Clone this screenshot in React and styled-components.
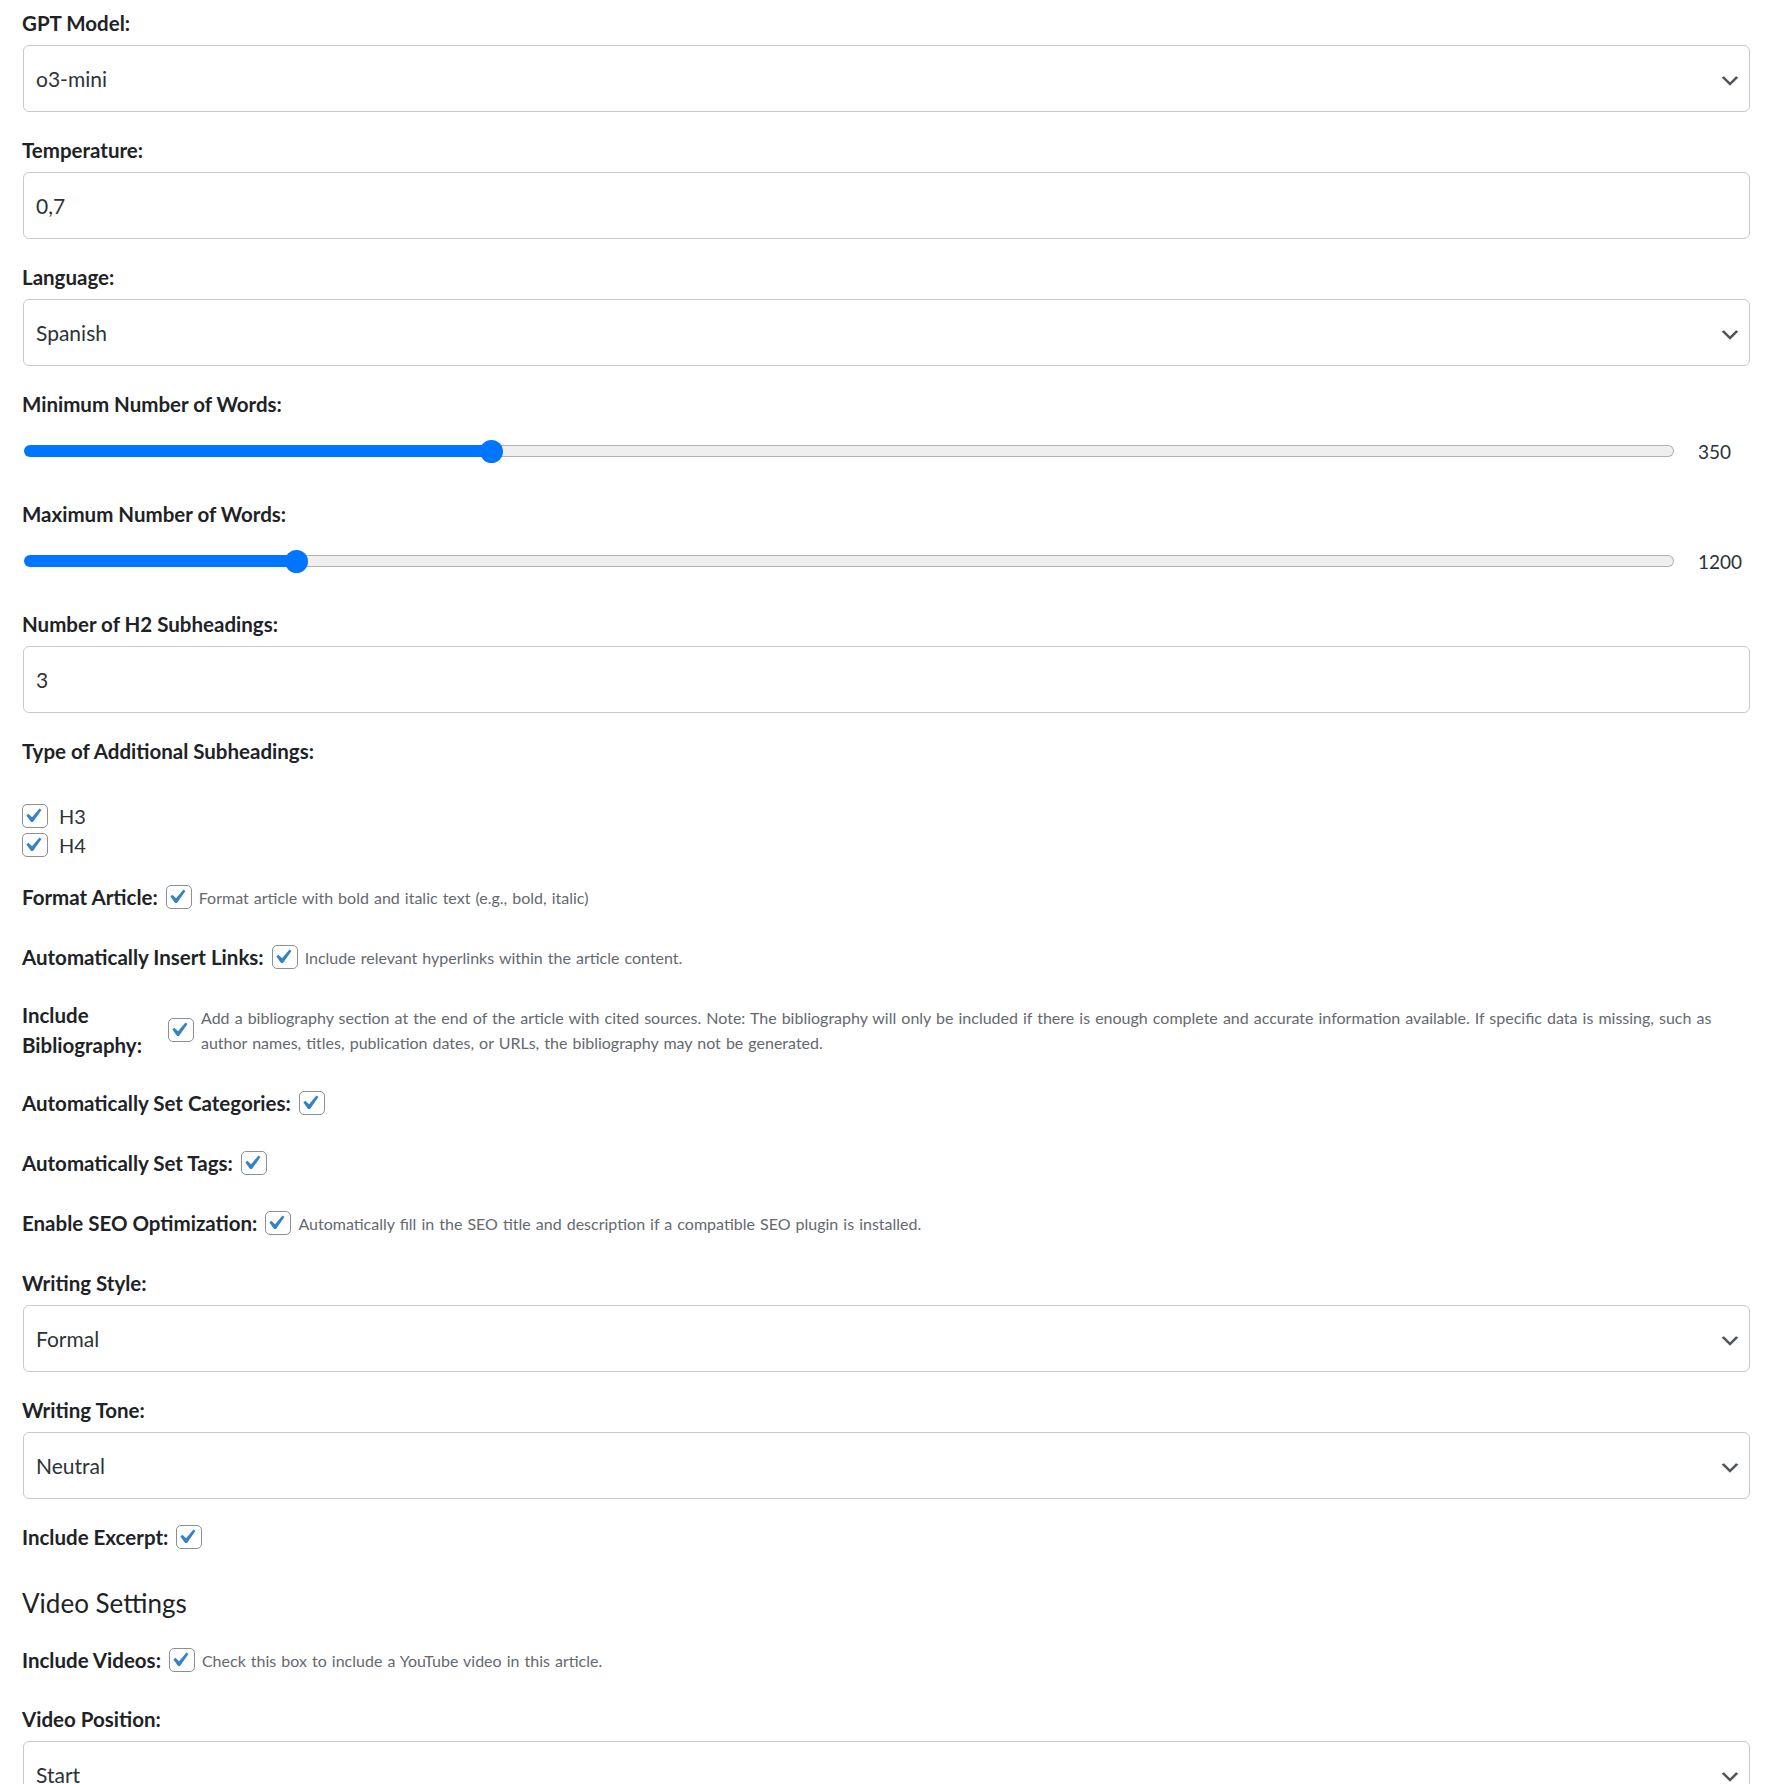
import React, { useState } from "react";
import styled, { createGlobalStyle } from "styled-components";

const GlobalStyle = createGlobalStyle`
  html, body {
    margin: 0;
    padding: 0;
    background: #fff;
  }
  body {
    font-family: Lato, "Noto Sans", sans-serif;
    color: #1d2327;
  }
  * {
    box-sizing: border-box;
  }
`;

const Page = styled.form`
  padding: 11px 16px 0 22px;
`;

const Field = styled.div`
  margin-bottom: ${(p) => p.$mb || "26px"};
`;

const FieldLabel = styled.label`
  display: block;
  font-size: 20.5px;
  font-weight: 700;
  line-height: 24px;
  margin-bottom: 10px;
`;

const SelectWrap = styled.div`
  position: relative;
  margin-left: 1px;
`;

const Select = styled.select`
  appearance: none;
  -webkit-appearance: none;
  display: block;
  width: 100%;
  height: 67px;
  padding: 0 48px 0 12px;
  border: 1px solid #c8c9cc;
  border-radius: 6px;
  background: #fff;
  font-family: inherit;
  font-size: 21px;
  color: #2c3338;
  outline: none;
`;

const Chevron = styled.svg`
  position: absolute;
  right: 8px;
  top: 24px;
  width: 24px;
  height: 24px;
  pointer-events: none;
`;

const TextInput = styled.input`
  display: block;
  width: calc(100% - 1px);
  margin-left: 1px;
  height: 67px;
  padding: 0 12px;
  border: 1px solid #c8c9cc;
  border-radius: 6px;
  font-family: inherit;
  font-size: 21px;
  color: #2c3338;
  outline: none;
`;

const SliderRow = styled.div`
  display: flex;
  align-items: center;
  height: 50px;
`;

const Range = styled.input`
  flex: 1;
  min-width: 0;
  height: 24px;
  margin: 0 0 0 2px;
  -webkit-appearance: none;
  appearance: none;
  background: transparent;

  &::-webkit-slider-runnable-track {
    height: 12px;
    border-radius: 6px;
    border: 1px solid transparent;
    background:
      linear-gradient(to right, #0075ff var(--fill), #efefef var(--fill)) padding-box,
      linear-gradient(to right, #0075ff var(--fill), #b2b2b2 var(--fill)) border-box;
  }

  &::-webkit-slider-thumb {
    -webkit-appearance: none;
    width: 23px;
    height: 23px;
    margin-top: -6.5px;
    border: none;
    border-radius: 50%;
    background: #0075ff;
  }
`;

const RangeValue = styled.span`
  width: 52px;
  margin-left: 24px;
  font-size: 19px;
  color: #2c3338;
`;

const OptionList = styled.div`
  margin-top: 38px;
  margin-bottom: 21px;
`;

const OptionRow = styled.label`
  display: flex;
  align-items: center;
  height: 29px;
  font-size: 20px;
  color: #2c3338;
`;

const OptionText = styled.span`
  margin-left: 11px;
`;

const InlineRow = styled.div`
  display: flex;
  align-items: center;
  min-height: 34px;
  margin-bottom: ${(p) => p.$mb || "26px"};
`;

const InlineLabel = styled.label`
  flex-shrink: 0;
  width: ${(p) => p.$width || "auto"};
  margin-right: 8px;
  font-size: 20.5px;
  font-weight: 700;
  line-height: 30px;
`;

const Hint = styled.span`
  margin-left: 7px;
  font-size: 16px;
  line-height: 25px;
  word-spacing: 0.06em;
  color: #646970;
`;

const Box = styled.span`
  display: inline-flex;
  flex-shrink: 0;
  width: 26px;
  height: 24px;
  border: 1px solid #8c8f94;
  border-radius: 5px;
  background: #fff;
  overflow: visible;

  svg {
    width: 32px;
    height: 32px;
    margin: -5px 0 0 -5px;
  }
`;

const SectionTitle = styled.h2`
  margin: 33px 0 24px;
  font-size: 26px;
  font-weight: 400;
  line-height: 32px;
  color: #1d2327;
`;

const Check = () => (
  <Box role="checkbox" aria-checked="true">
    <svg viewBox="0 0 20 20">
      <path
        d="M14.83 4.89l1.34.94-5.81 8.38H9.02L5.78 9.67l1.34-1.25 2.57 2.4z"
        fill="#3582c4"
      />
    </svg>
  </Box>
);

const SelectField = ({ label, value, options, mb }) => (
  <Field $mb={mb}>
    <FieldLabel>{label}</FieldLabel>
    <SelectWrap>
      <Select defaultValue={value}>
        {options.map((o) => (
          <option key={o}>{o}</option>
        ))}
      </Select>
      <Chevron viewBox="0 0 20 20">
        <path d="M5 6l5 5 5-5 2 1-7 7-7-7 2-1z" fill="#50575e" />
      </Chevron>
    </SelectWrap>
  </Field>
);

const InputField = ({ label, value }) => (
  <Field>
    <FieldLabel>{label}</FieldLabel>
    <TextInput type="text" defaultValue={value} />
  </Field>
);

const SliderField = ({ label, min, max, initial }) => {
  const [value, setValue] = useState(initial);
  const frac = (value - min) / (max - min);
  return (
    <Field>
      <FieldLabel>{label}</FieldLabel>
      <SliderRow>
        <Range
          type="range"
          min={min}
          max={max}
          value={value}
          onChange={(e) => setValue(Number(e.target.value))}
          style={{ "--fill": `calc(11.5px + ${frac} * (100% - 23px))` }}
        />
        <RangeValue>{value}</RangeValue>
      </SliderRow>
    </Field>
  );
};

const ToggleRow = ({ label, hint, labelWidth, mb }) => (
  <InlineRow $mb={mb}>
    <InlineLabel $width={labelWidth}>{label}</InlineLabel>
    <Check />
    {hint && <Hint>{hint}</Hint>}
  </InlineRow>
);

const App = () => {
  return (
    <>
      <GlobalStyle />
      <Page>
        <SelectField
          label="GPT Model:"
          value="o3-mini"
          options={["gpt-4o", "gpt-4o-mini", "o3-mini"]}
        />
        <InputField label="Temperature:" value="0,7" />
        <SelectField
          label="Language:"
          value="Spanish"
          options={["English", "Spanish", "French", "German"]}
        />
        <SliderField label="Minimum Number of Words:" min={0} max={1250} initial={350} />
        <SliderField label="Maximum Number of Words:" min={0} max={7500} initial={1200} />
        <InputField label="Number of H2 Subheadings:" value="3" />

        <FieldLabel>Type of Additional Subheadings:</FieldLabel>
        <OptionList>
          <OptionRow>
            <Check />
            <OptionText>H3</OptionText>
          </OptionRow>
          <OptionRow>
            <Check />
            <OptionText>H4</OptionText>
          </OptionRow>
        </OptionList>

        <ToggleRow
          label="Format Article:"
          hint="Format article with bold and italic text (e.g., bold, italic)"
        />
        <ToggleRow
          label="Automatically Insert Links:"
          hint="Include relevant hyperlinks within the article content."
        />
        <ToggleRow
          label="Include Bibliography:"
          labelWidth="138px"
          hint="Add a bibliography section at the end of the article with cited sources. Note: The bibliography will only be included if there is enough complete and accurate information available. If specific data is missing, such as author names, titles, publication dates, or URLs, the bibliography may not be generated."
        />
        <ToggleRow label="Automatically Set Categories:" />
        <ToggleRow label="Automatically Set Tags:" />
        <ToggleRow
          label="Enable SEO Optimization:"
          hint="Automatically fill in the SEO title and description if a compatible SEO plugin is installed."
          mb="31px"
        />

        <SelectField
          label="Writing Style:"
          value="Formal"
          options={["Formal", "Informal", "Academic"]}
        />
        <SelectField
          label="Writing Tone:"
          value="Neutral"
          options={["Neutral", "Friendly", "Persuasive"]}
          mb="21px"
        />
        <ToggleRow label="Include Excerpt:" mb="0" />

        <SectionTitle>Video Settings</SectionTitle>
        <ToggleRow
          label="Include Videos:"
          hint="Check this box to include a YouTube video in this article."
          mb="30px"
        />
        <SelectField
          label="Video Position:"
          value="Start"
          options={["Start", "Middle", "End"]}
          mb="0"
        />
      </Page>
    </>
  );
};

export default App;
